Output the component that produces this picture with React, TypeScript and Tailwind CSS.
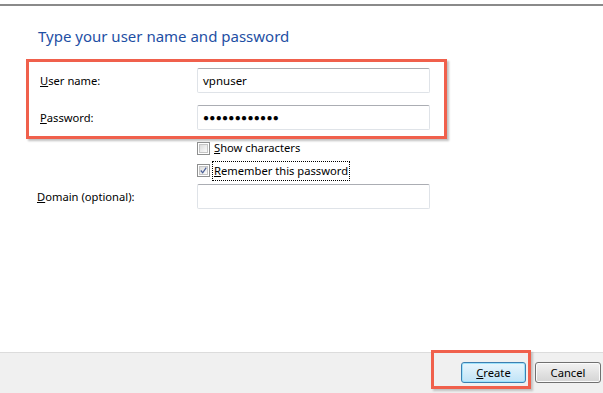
import React from 'react'

const font = "font-['Segoe_UI','Noto_Sans',sans-serif]"

function TextBox({ children }: { children?: React.ReactNode }) {
  return (
    <div className="w-[233px] h-[25px] rounded-[2px] border border-[#dfe3e8] border-t-[#abadb3] bg-white flex items-center px-[5px] text-[11.5px] text-black">
      {children}
    </div>
  )
}

function CheckBox({ checked }: { checked?: boolean }) {
  return (
    <div className="w-[13px] h-[13px] border border-[#8e8f8f] bg-white p-[1px] shrink-0">
      <div className="w-full h-full border border-[#c5c5c5] bg-gradient-to-br from-[#dcdcdc] to-[#fbfbfb] flex items-center justify-center">
        {checked && (
          <svg width="9" height="9" viewBox="0 0 9 9">
            <path d="M1 4.5 L3.5 7.5 L8 0.8" fill="none" stroke="#4a5f97" strokeWidth="1.6" />
          </svg>
        )}
      </div>
    </div>
  )
}

export default function App() {
  return (
    <div className={`w-[603px] h-[393px] bg-white flex flex-col overflow-hidden text-[11.2px] ${font}`}>
      <div className="mt-[4px] border-t-2 border-t-[#8a8a8a]" />

      <div className="flex-1">
        <div className="ml-[38px] mt-[20px] h-[21px] text-[15px] leading-[21px] text-[#1e4fa4]">
          Type your user name and password
        </div>

        {/* highlighted credentials */}
        <div className="ml-[26px] mt-[12px] w-[421px] border-[3px] border-[#f0604c] shadow-[2px_2px_2px_rgba(0,0,0,0.25)] pt-[6px] pb-[6px]">
          <div className="flex items-center">
            <div className="w-[168px] pl-[11px] pt-[2px] text-black">
              <span className="underline">U</span>ser name:
            </div>
            <TextBox>vpnuser</TextBox>
          </div>
          <div className="flex items-center mt-[12px]">
            <div className="w-[168px] pl-[11px] pt-[2px] text-black">
              <span className="underline">P</span>assword:
            </div>
            <TextBox>
              <span className="text-[10px] tracking-[0.3px]">●●●●●●●●●●●●</span>
            </TextBox>
          </div>
        </div>

        <div className="ml-[197px] mt-[3px] flex items-center gap-[3px] h-[13px] text-black">
          <CheckBox />
          <span className="px-[1px]">
            <span className="underline">S</span>how characters
          </span>
        </div>
        <div className="ml-[197px] mt-[9px] flex items-center gap-[2px] h-[13px] text-black">
          <CheckBox checked />
          <span className="border border-dotted border-black px-[1px] leading-[18px]">
            <span className="underline">R</span>emember this password
          </span>
        </div>

        <div className="flex items-center mt-[7px]">
          <div className="w-[197px] pl-[37px] pt-[2px] text-black">
            <span className="underline">D</span>omain (optional):
          </div>
          <TextBox />
        </div>
      </div>

      <div className="h-[41px] border-t border-t-[#dcdcdc] bg-[#f0f0f0] flex justify-end items-start pr-[2px] gap-[4px]">
        <div className="-mt-[3px] border-[3px] border-[#f0604c] shadow-[2px_2px_2px_rgba(0,0,0,0.2)] pl-[27px] pr-[2px] pt-[9px] pb-[3px]">
          <button className="w-[65px] h-[21px] rounded-[3px] border border-[#3c7fb1] bg-gradient-to-b from-[#e9f6fd] to-[#bfe3f7] shadow-[inset_0_0_0_1px_#9ee2fb] text-black leading-[19px]">
            <span className="underline">C</span>reate
          </button>
        </div>
        <button className="mt-[9px] w-[66px] h-[21px] rounded-[3px] border border-[#707070] bg-gradient-to-b from-[#f2f2f2] to-[#d4d4d4] shadow-[inset_0_0_0_1px_#fbfbfb] text-black leading-[19px]">
          Cancel
        </button>
      </div>
    </div>
  )
}
